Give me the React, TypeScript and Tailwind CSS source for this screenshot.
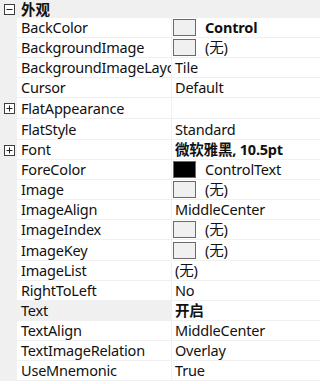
import React from "react";

type Row = {
  name: string;
  value: string;
  h: string;
  bold?: boolean;
  swatch?: "light" | "dark";
  plus?: boolean;
  selected?: boolean;
};

const rows: Row[] = [
  { name: "BackColor", value: "Control", h: "h-[20px]", bold: true, swatch: "light" },
  { name: "BackgroundImage", value: "(无)", h: "h-[20px]", swatch: "light" },
  { name: "BackgroundImageLayout", value: "Tile", h: "h-[20px]" },
  { name: "Cursor", value: "Default", h: "h-[20px]" },
  { name: "FlatAppearance", value: "", h: "h-[21px]", plus: true },
  { name: "FlatStyle", value: "Standard", h: "h-[21px]" },
  { name: "Font", value: "微软雅黑, 10.5pt", h: "h-[20px]", bold: true, plus: true },
  { name: "ForeColor", value: "ControlText", h: "h-[20px]", swatch: "dark" },
  { name: "Image", value: "(无)", h: "h-[20px]", swatch: "light" },
  { name: "ImageAlign", value: "MiddleCenter", h: "h-[20px]" },
  { name: "ImageIndex", value: "(无)", h: "h-[20px]", swatch: "light" },
  { name: "ImageKey", value: "(无)", h: "h-[21px]", swatch: "light" },
  { name: "ImageList", value: "(无)", h: "h-[20px]" },
  { name: "RightToLeft", value: "No", h: "h-[20px]" },
  { name: "Text", value: "开启", h: "h-[20px]", bold: true, selected: true },
  { name: "TextAlign", value: "MiddleCenter", h: "h-[20px]" },
  { name: "TextImageRelation", value: "Overlay", h: "h-[20px]" },
  { name: "UseMnemonic", value: "True", h: "h-[20px]" },
];

function ToggleBox({ plus }: { plus: boolean }) {
  return (
    <svg width="11" height="11" viewBox="0 0 11 11" className="block">
      <rect x="0.5" y="0.5" width="10" height="10" fill="#ffffff" stroke="#3c3c3c" strokeWidth="1" />
      <line x1="2.5" y1="5.5" x2="8.5" y2="5.5" stroke="#222" strokeWidth="1" />
      {plus && <line x1="5.5" y1="2.5" x2="5.5" y2="8.5" stroke="#222" strokeWidth="1" />}
    </svg>
  );
}

export default function App() {
  return (
    <div
      className="w-[320px] h-[384px] overflow-hidden bg-white text-[14.5px] tracking-[-0.2px] text-[#111] leading-none"
      style={{ fontFamily: '"Noto Sans", "Noto Sans CJK SC", sans-serif' }}
    >
      <div className="flex h-[18px] bg-[#f0f0f0] items-center">
        <div className="w-[17px] flex justify-center pl-[1px]">
          <ToggleBox plus={false} />
        </div>
        <div className="pl-[4px] font-bold text-[14.5px] tracking-normal">外观</div>
      </div>
      {rows.map((r) => (
        <div key={r.name} className={`flex ${r.h}`}>
          <div className="w-[17px] shrink-0 bg-[#f0f0f0] flex items-center justify-center pl-[1px]">
            {r.plus && <ToggleBox plus={true} />}
          </div>
          <div
            className={`w-[155px] shrink-0 overflow-hidden whitespace-nowrap flex items-center pl-[4px] border-b border-r border-[#f0f0f0] ${
              r.selected ? "bg-[#f0f0f0]" : "bg-white"
            }`}
          >
            {r.name}
          </div>
          <div className="flex-1 flex items-center border-b border-[#f0f0f0] whitespace-nowrap overflow-hidden">
            {r.swatch && (
              <div
                className={`ml-[1px] w-[23px] h-[17px] border border-[#6a6a6a] shrink-0 ${
                  r.swatch === "dark" ? "bg-black" : "bg-[#f0f0f0]"
                }`}
              />
            )}
            <span className={`${r.swatch ? "ml-[9px]" : "ml-[3px]"} ${r.bold ? "font-bold" : ""}`}>{r.value}</span>
          </div>
        </div>
      ))}
    </div>
  );
}
